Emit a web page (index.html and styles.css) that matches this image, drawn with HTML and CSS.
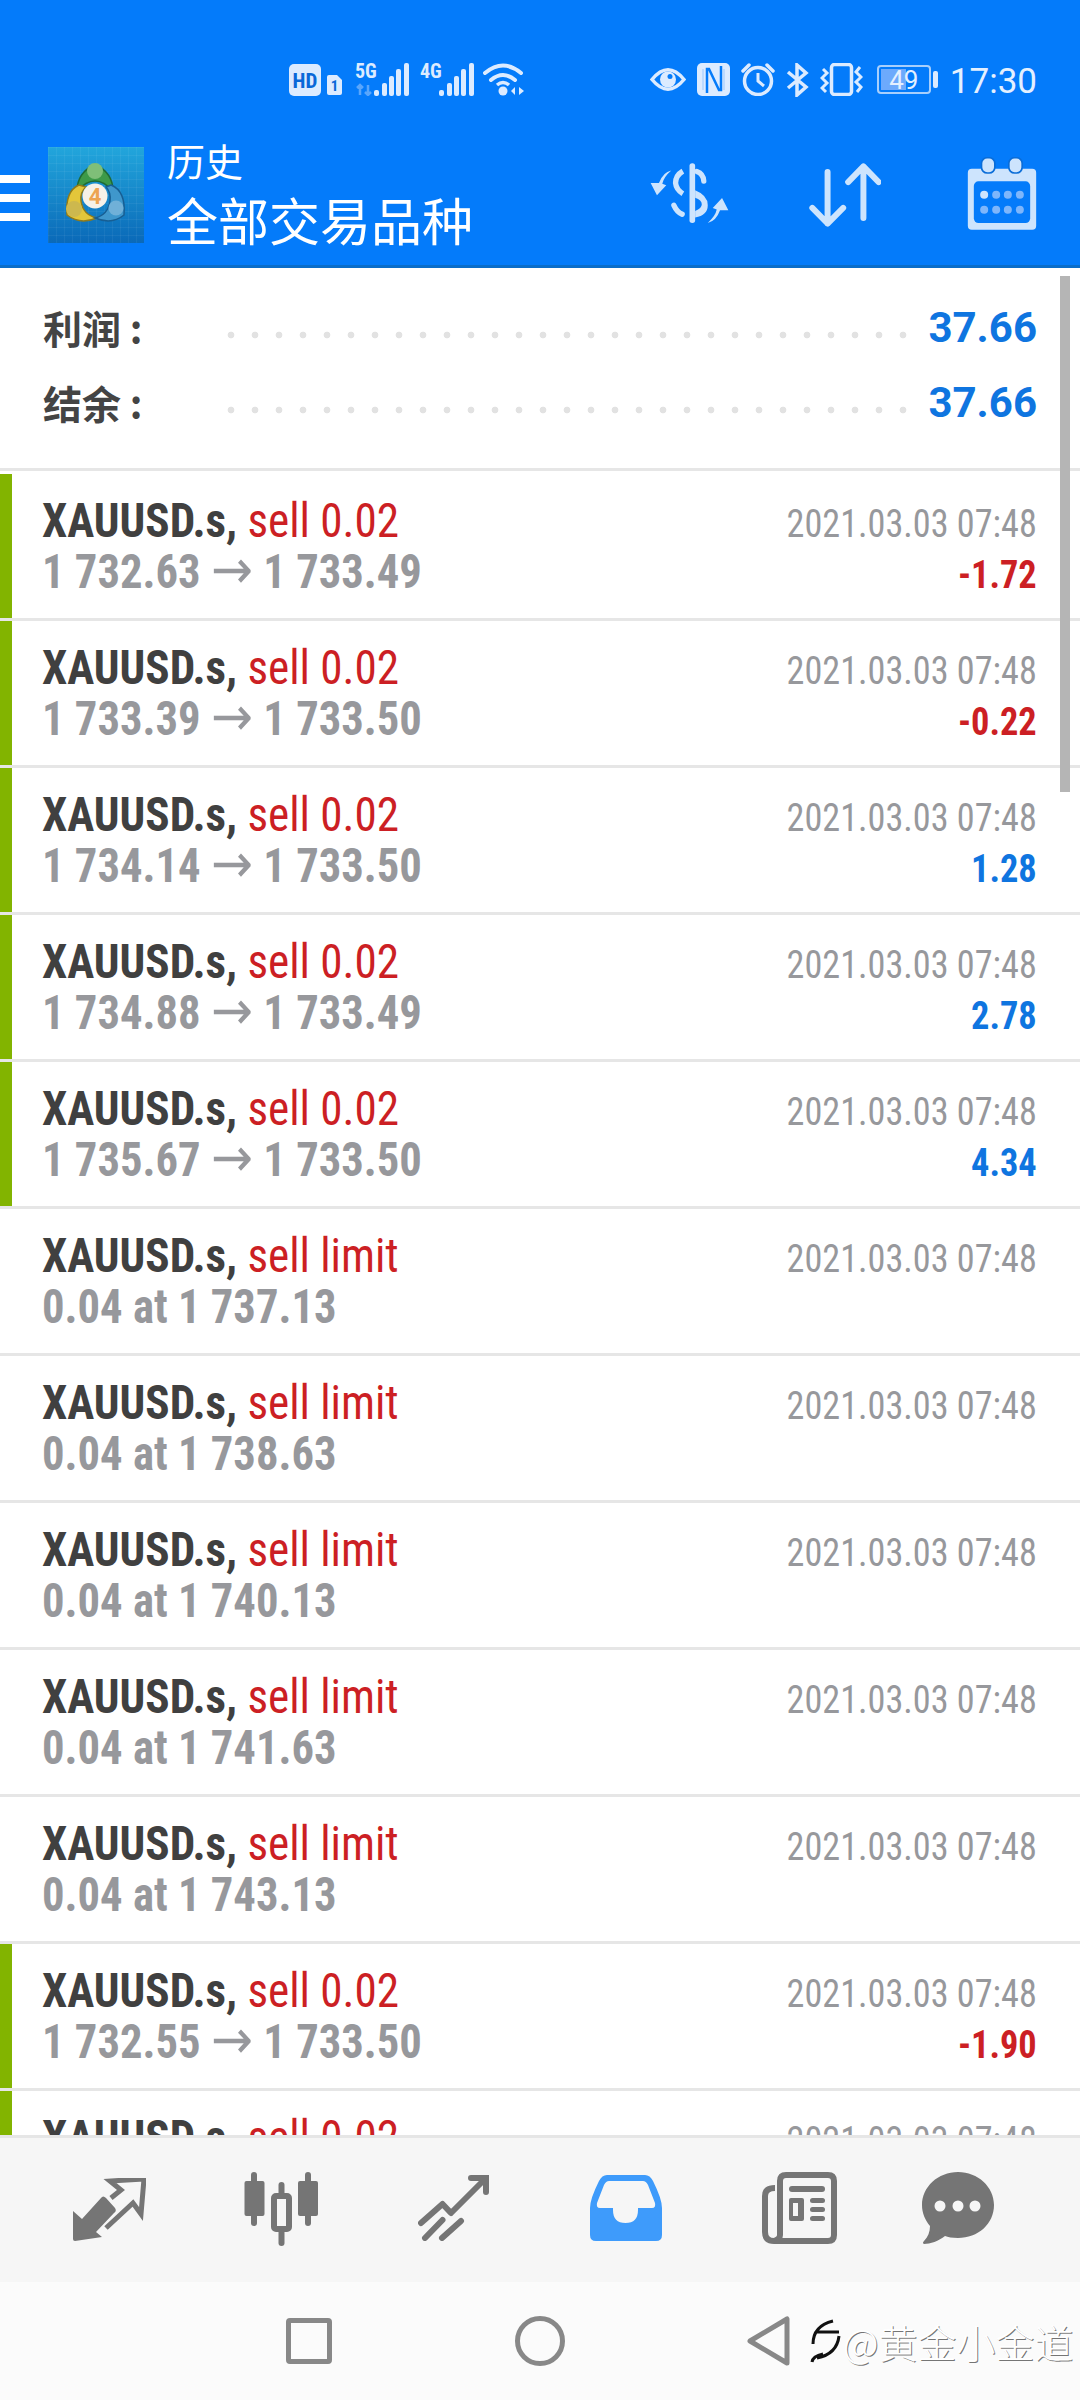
FILE: index.html
```html
<!DOCTYPE html>
<html lang="zh">
<head>
<meta charset="utf-8">
<title>历史</title>
<link rel="stylesheet" href="styles.css">
</head>
<body>
<div class="app">
  <header class="header">
    <div class="status">
      <div class="status-left">
        <svg class="i-hd" viewBox="0 0 32 32"><rect width="32" height="32" rx="5" fill="#dcebff"/><text x="16" y="24" text-anchor="middle" class="svg-hd">HD</text></svg>
        <svg class="i-sim" viewBox="0 0 15 20"><path d="M2 0H10L15 5V18Q15 20 13 20H2Q0 20 0 18V2Q0 0 2 0Z" fill="#dcebff"/><text x="7.5" y="16" text-anchor="middle" class="svg-sim">1</text></svg>
        <svg class="i-sig" viewBox="0 0 54 33"><text x="0" y="15" class="svg-net">5G</text><path d="M5 22V32M2 25L5 22L8 25M13 22V32M10 29L13 32L16 29" stroke="#5aa6fb" stroke-width="2.5" fill="none"/><g fill="#dcebff"><rect x="19" y="27" width="5" height="6" rx="2"/><rect x="27" y="20" width="5" height="13" rx="2"/><rect x="34" y="13" width="5" height="20" rx="2"/><rect x="41" y="6" width="5" height="27" rx="2"/><rect x="49" y="0" width="5" height="33" rx="2"/></g></svg>
        <svg class="i-sig" viewBox="0 0 54 33"><text x="0" y="15" class="svg-net">4G</text><g fill="#dcebff"><rect x="19" y="27" width="5" height="6" rx="2"/><rect x="27" y="20" width="5" height="13" rx="2"/><rect x="34" y="13" width="5" height="20" rx="2"/><rect x="41" y="6" width="5" height="27" rx="2"/><rect x="49" y="0" width="5" height="33" rx="2"/></g></svg>
        <svg class="i-wifi" viewBox="0 0 42 33"><g fill="none" stroke="#dcebff" stroke-width="4" stroke-linecap="round"><path d="M2 10Q20 -5 38 10"/><path d="M8 17Q20 7 32 17"/></g><circle cx="20" cy="28" r="4.5" fill="#dcebff"/><path d="M14 22Q20 17 26 22" stroke="#dcebff" stroke-width="3.5" fill="none"/><path d="M28 28L32 24V32ZM36 24L41 28L36 32Z" fill="#dcebff"/></svg>
      </div>
      <div class="status-right">
        <svg class="i-eye" viewBox="0 0 36 33"><path d="M2 16.500Q18 -3 34 16.500Q18 36 2 16.500Z" fill="none" stroke="#dcebff" stroke-width="3.500"/><circle cx="18" cy="16.500" r="8" fill="#dcebff"/><circle cx="20" cy="13.500" r="2.500" fill="#047bfa"/></svg>
        <svg class="i-nfc" viewBox="0 0 33 33"><rect width="33" height="33" rx="5" fill="#dcebff"/><path d="M10 30V6H12L22 27H24V3" fill="none" stroke="#047bfa" stroke-width="2.500"/><path d="M6 6V27M27 6V27" stroke="#9cc8fd" stroke-width="1"/></svg>
        <svg class="i-alarm" viewBox="0 0 34 33"><circle cx="17" cy="18" r="13.500" fill="none" stroke="#dcebff" stroke-width="3.500"/><path d="M17 10V18L23 23" fill="none" stroke="#dcebff" stroke-width="3"/><path d="M2 8L8 2M32 8L26 2" stroke="#dcebff" stroke-width="3.500" stroke-linecap="round"/></svg>
        <svg class="i-bt" viewBox="0 0 23 34"><path d="M2 9L20 24L11 32V2L20 10L2 25" fill="none" stroke="#dcebff" stroke-width="3.500"/></svg>
        <svg class="i-vib" viewBox="0 0 43 33"><rect x="11.500" y="1.500" width="20" height="30" rx="3" fill="none" stroke="#dcebff" stroke-width="3.500"/><path d="M3 6L7 10L2 15L7 20L2 25L6 29M40 4L36 9L41 14L36 19L41 24L37 29" fill="none" stroke="#dcebff" stroke-width="3"/></svg>
        <div class="battery"><div class="battery-body"><div class="battery-fill"></div><span class="battery-text">49</span></div><div class="battery-nub"></div></div>
        <span class="time">17:30</span>
      </div>
    </div>
    <div class="toolbar">
      <div class="burger"><span></span><span></span><span></span></div>
      <svg class="logo" viewBox="0 0 96 96">
        <defs><linearGradient id="lg" x1="0" y1="0" x2="0" y2="1"><stop offset="0" stop-color="#22a6dc"/><stop offset="1" stop-color="#0a69b8"/></linearGradient>
        <pattern id="gr" width="8" height="8" patternUnits="userSpaceOnUse"><path d="M8 0H0V8" fill="none" stroke="#fff" stroke-opacity=".1"/></pattern></defs>
        <rect width="96" height="96" fill="url(#lg)"/><rect width="96" height="96" fill="url(#gr)"/>
        <path d="M29 44Q29 26 47 17Q65 26 65 44Q56 34 47 34Q38 34 29 44Z" fill="#3d9a48" stroke="#1f6b35" stroke-width="1.500"/>
        <circle cx="47" cy="24" r="8" fill="#7fbf78"/>
        <path d="M31 38Q17 44 19 68Q32 78 49 71Q35 68 33 54Q32 45 38 40Z" fill="#e3c63a" stroke="#8f7a1a" stroke-width="1.500"/>
        <circle cx="26" cy="62" r="8" fill="#cdb84e"/>
        <path d="M63 38Q78 44 76 68Q64 78 47 71Q60 68 62 54Q63 45 58 40Z" fill="#3f97cc" stroke="#175e93" stroke-width="1.500"/>
        <circle cx="68" cy="61" r="7.500" fill="#70b0d8"/>
        <circle cx="47" cy="49" r="12.500" fill="#f6f1e8"/>
        <text x="47" y="57" text-anchor="middle" class="svg-four">4</text>
      </svg>
      <div class="titles">
        <div class="title-sm">历史</div>
        <div class="title-lg">全部交易品种</div>
      </div>
      <div class="tools">
        <svg class="t-ex" viewBox="25 50 250 225">
          <g fill="#cde4fd">
            <rect x="150" y="68" width="17" height="180" rx="8"/>
            <path d="M167 150Q205 165 205 195Q205 225 167 232V212Q187 205 187 192Q187 178 167 172Z"/>
            <path d="M95 90Q70 95 58 128L33 128L52 165L80 135L68 130Q72 110 95 90Z"/>
            <path d="M95 90Q70 95 58 128L33 128L52 165L80 135L68 130Q72 110 95 90Z" transform="rotate(180 150 169)"/>
          </g>
          <g fill="none" stroke="#cde4fd" stroke-width="16" stroke-linecap="round">
            <path d="M172 93Q192 100 193 122"/>
            <path d="M130 92Q108 105 108 128Q110 148 130 160" stroke-linecap="butt"/>
            <path d="M103 195Q112 215 128 222"/>
          </g>
        </svg>
        <svg class="t-ar" viewBox="505 50 220 225"><g fill="none" stroke="#cde4fd" stroke-width="18" stroke-linecap="round" stroke-linejoin="round"><path d="M564 95V250M518 203L564 250L611 203"/><path d="M672 233V78M626 125L672 78L718 125"/></g></svg>
        <svg class="t-cal" viewBox="980 50 215 225">
          <rect x="985" y="85" width="205" height="183" rx="12" fill="#cde4fd"/>
          <rect x="1003" y="123" width="169" height="125" rx="14" fill="#047bfa"/>
          <g fill="#cde4fd" stroke="#0a6dd8" stroke-width="5"><rect x="1026" y="52" width="40" height="46" rx="17"/><rect x="1108" y="52" width="40" height="46" rx="17"/></g>
          <circle cx="1034" cy="163" r="12" fill="#cde4fd"/>
          <g fill="#7eb6fb"><circle cx="1070" cy="163" r="12"/><circle cx="1105" cy="163" r="12"/><circle cx="1141" cy="163" r="12"/><circle cx="1034" cy="208" r="12"/><circle cx="1070" cy="208" r="12"/><circle cx="1105" cy="208" r="12"/><circle cx="1141" cy="208" r="12"/></g>
        </svg>
      </div>
    </div>
  </header>

  <main class="list">
    <div class="scrollbar"></div>
    <section class="summary">
      <div class="sum-row"><span class="sum-label">利润 :</span><span class="dots"></span><span class="sum-value">37.66</span></div>
      <div class="sum-row"><span class="sum-label">结余 :</span><span class="dots"></span><span class="sum-value">37.66</span></div>
    </section>

    <div class="row"><div class="bar on"></div><div class="left"><div class="l1"><b>XAUUSD.s,</b> <span class="red">sell 0.02</span></div><div class="l2">1 732.63 <span class="arrow">→</span> 1 733.49</div></div><div class="right"><div class="date">2021.03.03 07:48</div><div class="pl neg">-1.72</div></div></div>
    <div class="row"><div class="bar on"></div><div class="left"><div class="l1"><b>XAUUSD.s,</b> <span class="red">sell 0.02</span></div><div class="l2">1 733.39 <span class="arrow">→</span> 1 733.50</div></div><div class="right"><div class="date">2021.03.03 07:48</div><div class="pl neg">-0.22</div></div></div>
    <div class="row"><div class="bar on"></div><div class="left"><div class="l1"><b>XAUUSD.s,</b> <span class="red">sell 0.02</span></div><div class="l2">1 734.14 <span class="arrow">→</span> 1 733.50</div></div><div class="right"><div class="date">2021.03.03 07:48</div><div class="pl pos">1.28</div></div></div>
    <div class="row"><div class="bar on"></div><div class="left"><div class="l1"><b>XAUUSD.s,</b> <span class="red">sell 0.02</span></div><div class="l2">1 734.88 <span class="arrow">→</span> 1 733.49</div></div><div class="right"><div class="date">2021.03.03 07:48</div><div class="pl pos">2.78</div></div></div>
    <div class="row"><div class="bar on"></div><div class="left"><div class="l1"><b>XAUUSD.s,</b> <span class="red">sell 0.02</span></div><div class="l2">1 735.67 <span class="arrow">→</span> 1 733.50</div></div><div class="right"><div class="date">2021.03.03 07:48</div><div class="pl pos">4.34</div></div></div>
    <div class="row"><div class="bar"></div><div class="left"><div class="l1"><b>XAUUSD.s,</b> <span class="red">sell limit</span></div><div class="l2">0.04 at 1 737.13</div></div><div class="right"><div class="date">2021.03.03 07:48</div></div></div>
    <div class="row"><div class="bar"></div><div class="left"><div class="l1"><b>XAUUSD.s,</b> <span class="red">sell limit</span></div><div class="l2">0.04 at 1 738.63</div></div><div class="right"><div class="date">2021.03.03 07:48</div></div></div>
    <div class="row"><div class="bar"></div><div class="left"><div class="l1"><b>XAUUSD.s,</b> <span class="red">sell limit</span></div><div class="l2">0.04 at 1 740.13</div></div><div class="right"><div class="date">2021.03.03 07:48</div></div></div>
    <div class="row"><div class="bar"></div><div class="left"><div class="l1"><b>XAUUSD.s,</b> <span class="red">sell limit</span></div><div class="l2">0.04 at 1 741.63</div></div><div class="right"><div class="date">2021.03.03 07:48</div></div></div>
    <div class="row"><div class="bar"></div><div class="left"><div class="l1"><b>XAUUSD.s,</b> <span class="red">sell limit</span></div><div class="l2">0.04 at 1 743.13</div></div><div class="right"><div class="date">2021.03.03 07:48</div></div></div>
    <div class="row"><div class="bar on"></div><div class="left"><div class="l1"><b>XAUUSD.s,</b> <span class="red">sell 0.02</span></div><div class="l2">1 732.55 <span class="arrow">→</span> 1 733.50</div></div><div class="right"><div class="date">2021.03.03 07:48</div><div class="pl neg">-1.90</div></div></div>
    <div class="row"><div class="bar on"></div><div class="left"><div class="l1"><b>XAUUSD.s,</b> <span class="red">sell 0.02</span></div></div><div class="right"><div class="date">2021.03.03 07:48</div></div></div>
  </main>

  <nav class="tabs">
    <div class="tab"><svg class="ic1" viewBox="0 0 73 63"><path d="M38 20L48 12L37 3L71 1L68 36L60 25L33 50" fill="none" stroke="#757575" stroke-width="5"/><path d="M0 33L9 41L28 20Q30 17 33 20L42 30Q44 33 41 35L23 54L29 59L2 63Q0 63 0 61Z" fill="#757575"/></svg></div>
    <div class="tab"><svg class="ic2" viewBox="0 0 75 74"><g fill="#757575"><rect x="7" y="0" width="6" height="54" rx="3"/><rect x="0.500" y="9" width="20" height="35" rx="2"/><rect x="61" y="0" width="6" height="54" rx="3"/><rect x="54" y="9" width="20" height="35" rx="2"/><rect x="34.500" y="10" width="6" height="64" rx="3"/></g><rect x="30" y="24" width="15" height="33" rx="2" fill="#f6f6f6" stroke="#757575" stroke-width="6"/></svg></div>
    <div class="tab"><svg class="ic3" viewBox="0 0 72 66"><g fill="none" stroke="#757575" stroke-width="6" stroke-linecap="round" stroke-linejoin="round"><path d="M3 48L24.500 29L33 38L66 5"/><path d="M7 63L24.500 45M24 63L43 46"/></g><path d="M53 0H71V17Q71 20 68 20Q65 20 65 17V6H53Q50 6 50 3Q50 0 53 0Z" fill="#757575"/></svg></div>
    <div class="tab"><svg class="ic4" viewBox="0 0 72 66"><path fill-rule="evenodd" d="M17 0H55Q60 0 63 6Q72 24 72 33V60Q72 66 66 66H6Q0 66 0 60V33Q0 24 9 6Q12 0 17 0ZM19 6Q16 6 14 10L7 28Q6 33 10 33H23V35Q23 48 35.500 48Q48 48 48 35V33H62Q66 33 65 28L58 10Q56 6 53 6Z" fill="#3e9bfb"/></svg></div>
    <div class="tab"><svg class="ic5" viewBox="0 0 75 72"><path d="M13 16Q3 16 3 24V60Q3 69 12 69H66Q72 69 72 63V9Q72 3 66 3H24Q18 3 18 9V63Q18 67 12 69" fill="none" stroke="#757575" stroke-width="6"/><g fill="#757575"><rect x="27" y="14" width="36" height="6" rx="3"/><path fill-rule="evenodd" d="M29 26H40Q42 26 42 28V47Q42 49 40 49H29Q27 49 27 47V28Q27 26 29 26ZM31 31V44H36V31Z"/><rect x="48" y="26" width="15" height="5" rx="2.500"/><rect x="48" y="35" width="15" height="5" rx="2.500"/><rect x="48" y="44" width="15" height="5" rx="2.500"/></g></svg></div>
    <div class="tab"><svg class="ic6" viewBox="0 0 72 72"><path d="M36 0C56 0 72 15 72 33C72 52 56 66 36 66C30 66 26 65 23 64C17 69 8 72 2 72Q0 71 2 69C6 65 8 60 8 54C3 48 0 41 0 33C0 15 16 0 36 0Z" fill="#757575"/><g fill="#f6f6f6"><circle cx="18" cy="34" r="5.500"/><circle cx="36" cy="34" r="5.500"/><circle cx="53" cy="34" r="5.500"/></g></svg></div>
  </nav>

  <footer class="navbar">
    <div class="nav-square"></div>
    <div class="nav-circle"></div>
    <svg class="nav-back" viewBox="0 0 43 50"><path d="M40 3V47L3 25Z" fill="none" stroke="#888" stroke-width="5" stroke-linejoin="round"/></svg>
    <div class="mark">
      <svg class="mark-ic" viewBox="0 0 32 46"><path d="M4 26Q4 8 24 3M8 14H30M30 18Q28 36 8 40M3 44Q4 38 14 36" fill="none" stroke="#111" stroke-width="3"/></svg>
      <span class="mark-text">@黄金小金道</span>
    </div>
  </footer>
</div>
</body>
</html>
```
FILE: styles.css
```css
* { box-sizing: border-box; }
html, body { margin: 0; padding: 0; }
body { width: 1080px; height: 2400px; overflow: hidden; background: #fff; font-family: Roboto, "Noto Sans CJK SC", sans-serif; }
.app { width: 1080px; height: 2400px; display: flex; flex-direction: column; overflow: hidden; }

/* header */
.header { height: 268px; flex: none; background: #047bfa; border-bottom: 3px solid #0a6dc9; }
.status { height: 147px; padding: 63px 43px 0 289px; display: flex; justify-content: space-between; align-items: flex-start; }
.status svg { display: block; flex: none; }
.status-left { display: flex; gap: 11px; }
.status-right { display: flex; gap: 11px; }
.i-hd { width: 32px; height: 32px; margin-top: 1px; }
.i-sim { width: 15px; height: 20px; margin: 12px 2px 0 -5px; }
.i-sig { width: 54px; height: 33px; }
.i-wifi { width: 42px; height: 33px; margin-left: -2px; }
.i-eye { width: 36px; height: 33px; }
.i-nfc { width: 33px; height: 33px; }
.i-alarm { width: 34px; height: 33px; }
.i-bt { width: 23px; height: 34px; }
.i-vib { width: 43px; height: 33px; }
.svg-hd { font: 700 21px "Roboto Condensed", Roboto, sans-serif; fill: #0a68d8; }
.svg-sim { font: 700 15px "Roboto Condensed", Roboto, sans-serif; fill: #0a68d8; }
.svg-net { font: 700 20px "Roboto Condensed", Roboto, sans-serif; fill: #dcebff; }
.svg-four { font: 700 22px Roboto, sans-serif; fill: #eda452; }
.battery { width: 62px; height: 29px; margin: 2px 0 0 3px; display: flex; align-items: center; gap: 2px; }
.battery-body { position: relative; width: 54px; height: 29px; border: 2px solid #a8cffc; border-radius: 4px; overflow: hidden; display: flex; align-items: center; justify-content: center; }
.battery-fill { position: absolute; left: 2px; top: 2px; bottom: 2px; width: 25px; background: #6daafc; }
.battery-text { position: relative; font: 400 26px/1 Roboto, sans-serif; color: #e4f0ff; }
.battery-nub { width: 5px; height: 17px; border-radius: 2px; background: #dcebff; }
.time { font: 400 35px/36px Roboto, sans-serif; color: #e4f0ff; margin-top: 1px; }

.toolbar { height: 118px; display: flex; align-items: flex-start; }
.burger { width: 30px; margin-top: 28px; display: flex; flex-direction: column; gap: 11px; }
.burger span { display: block; height: 8px; background: #fff; }
.logo { width: 96px; height: 96px; margin-left: 18px; flex: none; }
.titles { margin-left: 23px; color: #fff; font-family: "Noto Sans CJK SC", sans-serif; }
.title-sm { font-size: 38px; line-height: 40px; margin-top: -7px; }
.title-lg { font-size: 51px; line-height: 60px; margin-top: 9px; }
.tools { margin-left: auto; padding-right: 42px; margin-top: 10px; display: flex; align-items: flex-start; }
.tools svg { display: block; flex: none; height: 75px; }
.t-ex { width: 83px; }
.t-ar { width: 73px; margin-left: 77px; }
.t-cal { width: 72px; margin-left: 85px; }

/* list */
.list { position: relative; flex: 1; min-height: 0; overflow: hidden; border-bottom: 3px solid #e6e6e6; }
.scrollbar { position: absolute; right: 10px; top: 8px; width: 10px; height: 516px; background: #b5b5b5; z-index: 2; }
.summary { height: 203px; padding-top: 22px; border-bottom: 3px solid #e6e6e6; margin-bottom: 3px; }
.sum-row { height: 75px; padding: 0 43px; display: flex; align-items: center; }
.sum-label { width: 176px; flex: none; font: 700 39px/1 "Noto Sans CJK SC", sans-serif; color: #444; white-space: nowrap; }
.dots { width: 696px; height: 8px; margin-top: 14px; flex: none; background: radial-gradient(circle, #e2e2e2 3px, transparent 3.7px) 0 0 / 24px 8px repeat-x; }
.sum-value { margin-left: auto; font: 700 42px/1 Roboto, sans-serif; color: #0f75e0; }

.row { height: 147px; display: flex; border-bottom: 3px solid #e6e6e6; }
.bar { width: 12px; flex: none; }
.bar.on { background: #82b400; }
.left { margin-left: 30px; padding-top: 21px; flex: 1; white-space: nowrap; }
.l1, .l2, .date, .pl { font-family: "Roboto Condensed", Roboto, sans-serif; font-stretch: 75%; white-space: nowrap; }
.l1 { font-size: 48px; line-height: 51px; transform: scaleX(.94); transform-origin: left; color: #404040; }
.l1 b { font-weight: 700; }
.red { color: #cc1f24; }
.l2 { font-size: 48px; line-height: 51px; font-weight: 700; color: #97989c; transform: scaleX(.93); transform-origin: left; }
.arrow { font: 400 54px/0 "DejaVu Sans", sans-serif; }
.right { padding: 25px 43px 0 0; text-align: right; flex: none; }
.date { font-size: 38px; line-height: 51px; font-weight: 400; color: #97989c; transform: scaleX(.952); transform-origin: right; }
.pl { font-size: 38px; line-height: 50px; font-weight: 700; transform: scaleX(.957); transform-origin: right; }
.neg { color: #cc1f24; }
.pos { color: #0f75e0; }

/* tabs */
.tabs { height: 144px; flex: none; background: #f6f6f6; padding-left: 22px; display: grid; grid-template-columns: repeat(5, 172.7px) 145px; align-items: start; }
.tab { display: flex; justify-content: center; padding-top: 34px; }
.tab svg { display: block; }
.ic1 { width: 73px; height: 63px; margin: 6px 0 0 2px; }
.ic2 { width: 75px; height: 74px; }
.ic3 { width: 72px; height: 66px; margin-top: 3px; }
.ic4 { width: 72px; height: 66px; margin-top: 3px; }
.ic5 { width: 75px; height: 72px; }
.ic6 { width: 72px; height: 72px; }

/* nav */
.navbar { height: 118px; flex: none; background: #fbfbfb; padding-left: 286px; display: flex; align-items: center; }
.nav-square { width: 46px; height: 46px; border: 5px solid #888; border-radius: 4px; flex: none; }
.nav-circle { width: 50px; height: 50px; border: 5px solid #888; border-radius: 50%; margin-left: 183px; flex: none; }
.nav-back { width: 43px; height: 50px; margin-left: 182px; flex: none; display: block; }
.mark { display: flex; align-items: center; margin-left: 19px; }
.mark-ic { width: 32px; height: 46px; flex: none; }
.mark-text { font: 300 39px/46px "Noto Sans CJK SC", sans-serif; color: #fff; text-shadow: 1px 1px 0 rgba(0,0,0,.55); margin-left: 2px; white-space: nowrap; }
```
